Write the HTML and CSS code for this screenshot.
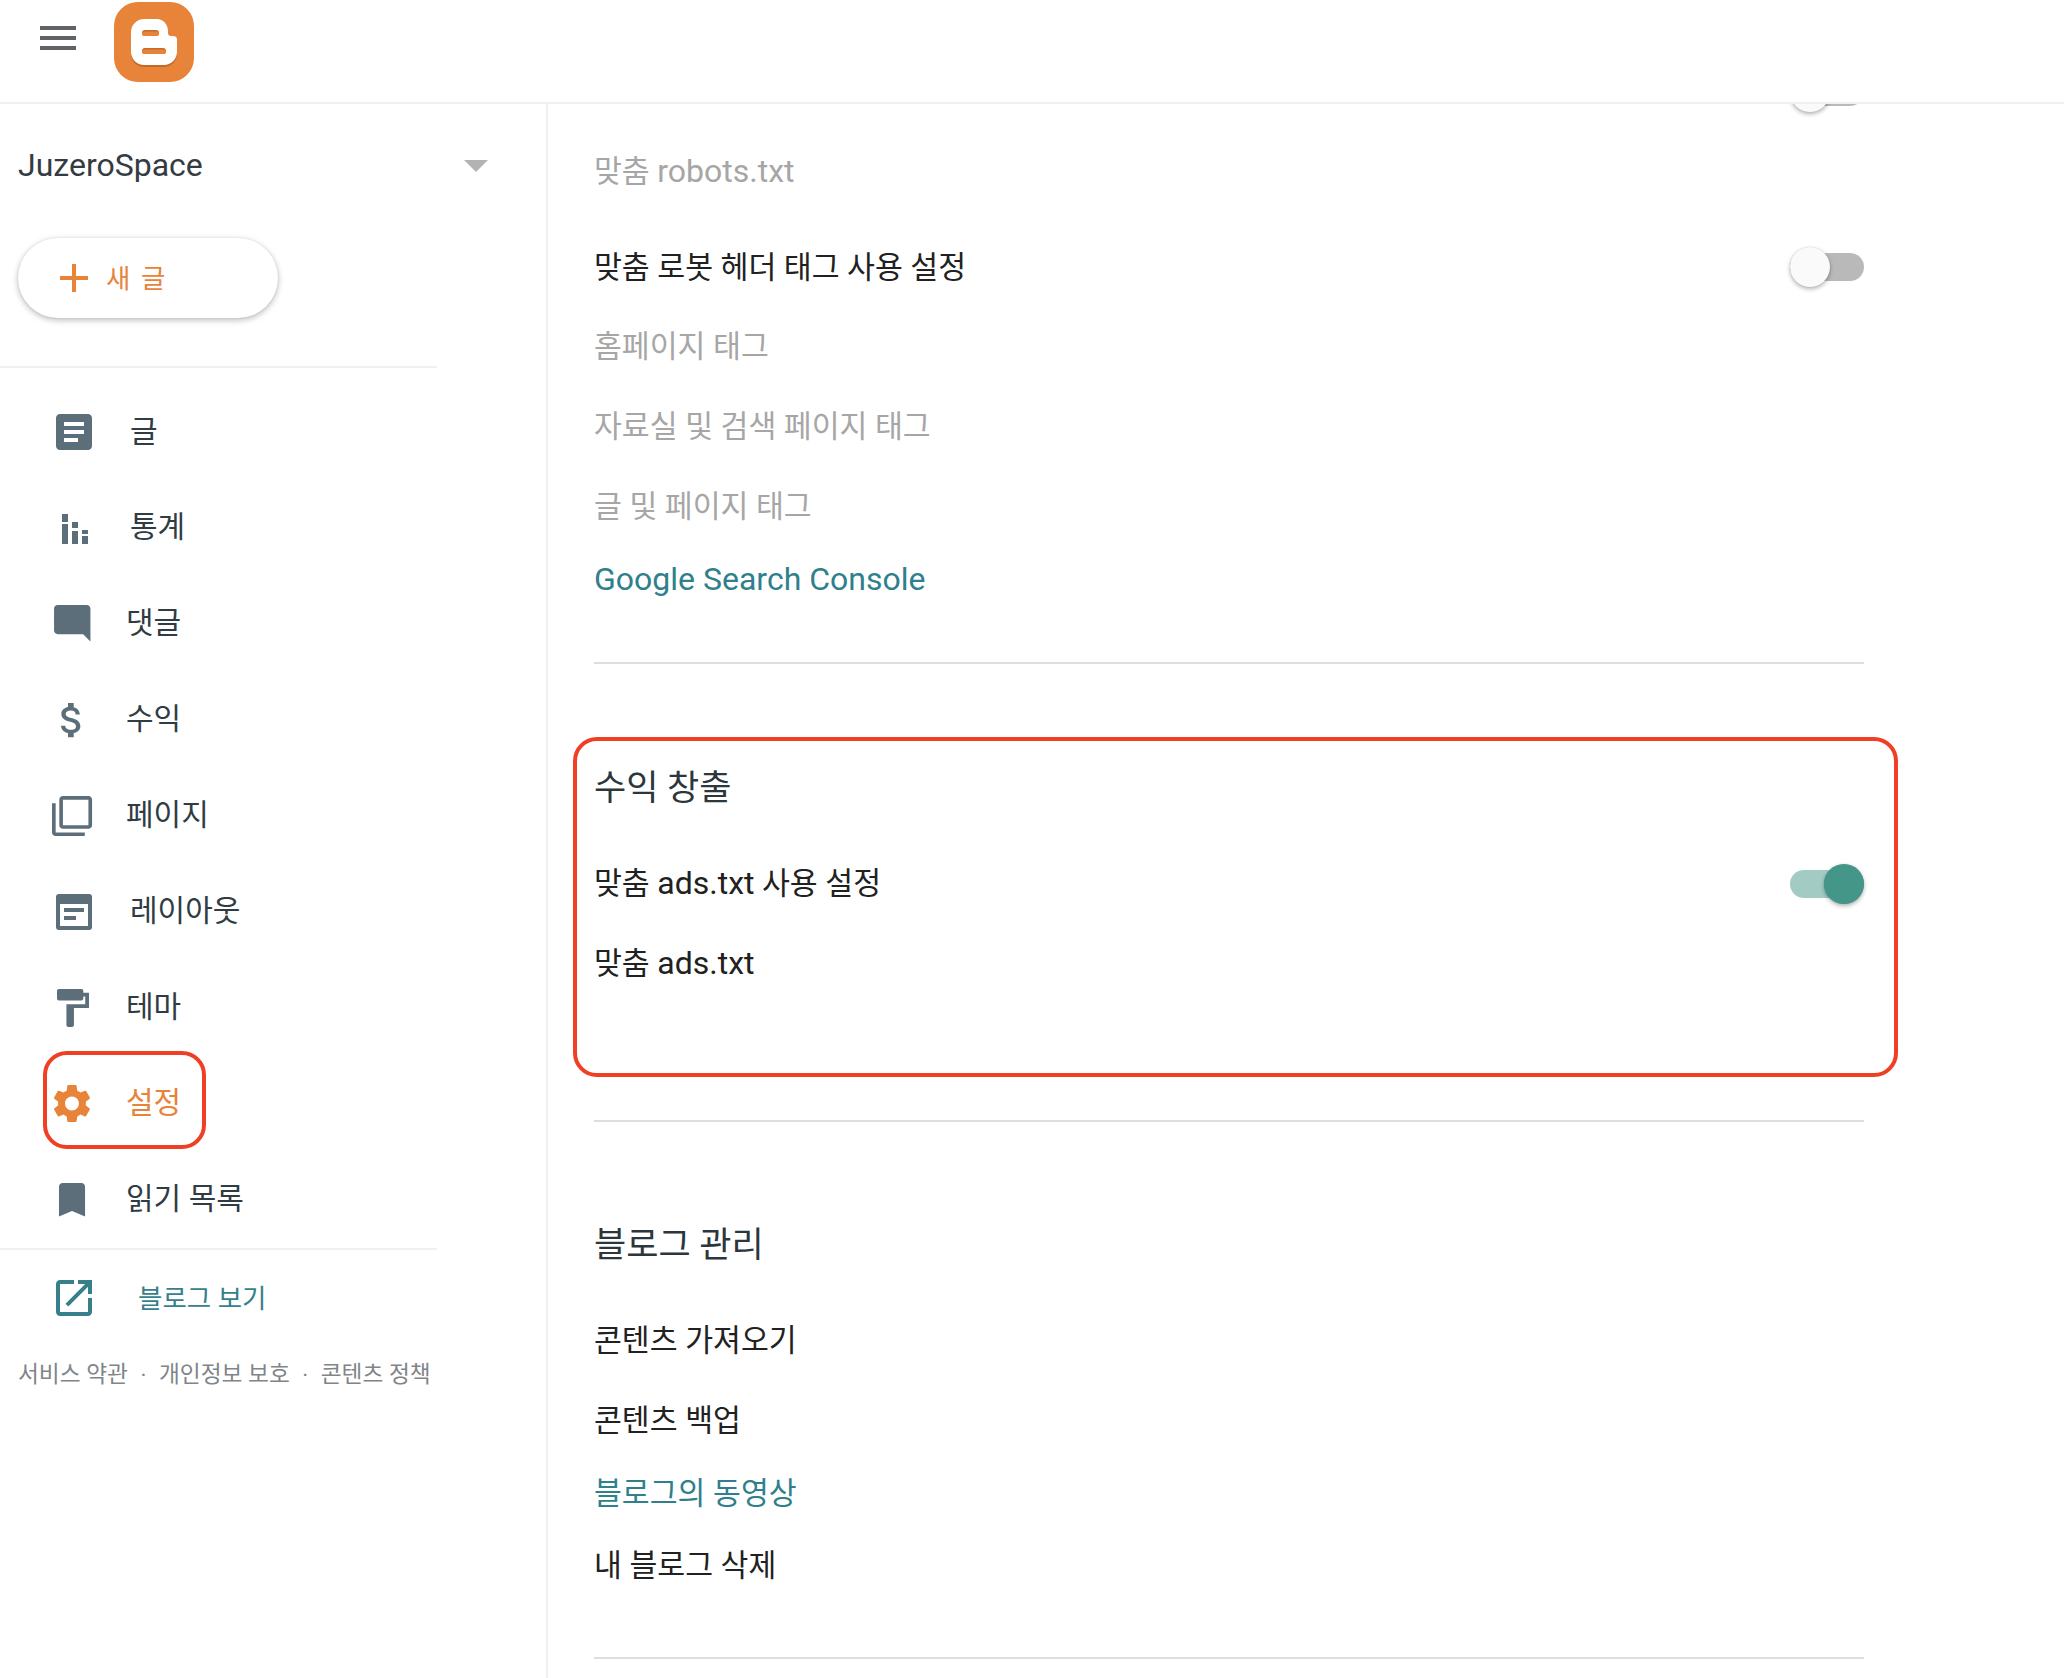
FILE: index.html
```html
<!DOCTYPE html>
<html lang="ko">
<head>
<meta charset="utf-8">
<title>Blogger 설정</title>
<link rel="stylesheet" href="styles.css">
</head>
<body>
<header class="topbar">
  <div class="burger"><span></span><span></span><span></span></div>
  <svg class="logo" viewBox="0 0 80 80">
    <rect width="80" height="80" rx="24" fill="#e8833a"/>
    <path d="M30 19h13c6 0 11 5 11 12v2c0 2 1 3 3 3h2c2 0 4 1 4 3v13c0 7-6 13-13 13H30c-7 0-13-6-13-13V32c0-7 6-13 13-13z" fill="#c46a28"/>
    <path d="M30 17h13c6 0 11 5 11 12v2c0 2 1 3 3 3h2c2 0 4 1 4 3v13c0 7-6 13-13 13H30c-7 0-13-6-13-13V30c0-7 6-13 13-13z" fill="#fff"/>
    <rect x="28" y="28" width="17" height="6" rx="3" fill="#c46a28"/>
    <rect x="28" y="29.5" width="17" height="4.5" rx="2.25" fill="#e8833a"/>
    <rect x="28" y="46" width="24" height="6" rx="3" fill="#c46a28"/>
    <rect x="28" y="47.5" width="24" height="4.5" rx="2.25" fill="#e8833a"/>
  </svg>
</header>
<div class="layout">
  <aside class="sidebar">
    <div class="blogname"><span>JuzeroSpace</span><i class="caret"></i></div>
    <button class="newpost">
      <svg class="plus" viewBox="0 0 28 28"><path d="M12 0h4v12h12v4H16v12h-4V16H0v-4h12z"/></svg>
      <span>새 글</span>
    </button>
    <nav class="nav">
      <a class="item">
        <svg class="ico" viewBox="0 0 48 48"><g transform="scale(2)"><path d="M19 3H5c-1.1 0-2 .9-2 2v14c0 1.1.9 2 2 2h14c1.1 0 2-.9 2-2V5c0-1.1-.9-2-2-2zm-5 14H7v-2h7v2zm3-4H7v-2h10v2zm0-4H7V7h10v2z"/></g></svg>
        <span class="label far first">글</span>
      </a>
      <a class="item">
        <svg class="ico" viewBox="0 0 48 48"><path d="M12 10h6v8h-6zM12 20h6v20h-6zM22 18h6v6h-6zM22 27h6v13h-6zM32 26h6v4h-6zM32 32h6v8h-6z"/></svg>
        <span class="label far">통계</span>
      </a>
      <a class="item">
        <svg class="ico" viewBox="0 0 48 48"><g transform="translate(.4 1.4) scale(1.82)"><path d="M21.99 4c0-1.1-.89-2-1.99-2H4c-1.1 0-2 .9-2 2v12c0 1.1.9 2 2 2h14l4 4-.01-18z"/></g></svg>
        <span class="label">댓글</span>
      </a>
      <a class="item">
        <svg class="ico" viewBox="0 0 48 48"><g transform="translate(-1 1.3) scale(1.9)"><path d="M11.8 10.9c-2.27-.59-3-1.2-3-2.15 0-1.09 1.01-1.85 2.7-1.85 1.78 0 2.44.85 2.5 2.1h2.21c-.07-1.72-1.12-3.3-3.21-3.81V3h-3v2.16c-1.94.42-3.5 1.68-3.5 3.61 0 2.31 1.91 3.46 4.7 4.13 2.5.6 3 1.48 3 2.41 0 .69-.49 1.79-2.7 1.79-2.06 0-2.87-.92-2.98-2.1h-2.2c.12 2.19 1.76 3.42 3.68 3.83V21h3v-2.15c1.95-.37 3.5-1.5 3.5-3.55 0-2.84-2.43-3.81-4.7-4.4z"/></g></svg>
        <span class="label">수익</span>
      </a>
      <a class="item">
        <svg class="ico" viewBox="0 0 48 48"><g transform="translate(.2 2.2) scale(1.82)"><path d="M3 5H1v16c0 1.1.9 2 2 2h16v-2H3V5zm18-4H7c-1.1 0-2 .9-2 2v14c0 1.1.9 2 2 2h14c1.1 0 2-.9 2-2V3c0-1.1-.9-2-2-2zm0 16H7V3h14v14z"/></g></svg>
        <span class="label">페이지</span>
      </a>
      <a class="item">
        <svg class="ico" viewBox="0 0 48 48"><path fill-rule="evenodd" d="M9 6h30a3 3 0 0 1 3 3v30a3 3 0 0 1-3 3H9a3 3 0 0 1-3-3V9a3 3 0 0 1 3-3zM10 16v22h28V16zM14 20h20v4H14zM14 28h12v4H14z"/></svg>
        <span class="label far">레이아웃</span>
      </a>
      <a class="item">
        <svg class="ico" viewBox="0 0 48 48"><g transform="translate(-.5 1.2) scale(1.88 1.9)"><path d="M18 4V3c0-.55-.45-1-1-1H5c-.55 0-1 .45-1 1v4c0 .55.45 1 1 1h12c.55 0 1-.45 1-1V6h1v4H9v11c0 .55.45 1 1 1h2c.55 0 1-.45 1-1v-9h8V4h-3z"/></g></svg>
        <span class="label">테마</span>
      </a>
      <a class="item active">
        <svg class="ico" viewBox="0 0 48 48"><g transform="translate(-1.2 .4) scale(1.93)"><path d="M19.14,12.94c0.04-0.3,0.06-0.61,0.06-0.94c0-0.32-0.02-0.64-0.07-0.94l2.03-1.58c0.18-0.14,0.23-0.41,0.12-0.61 l-1.92-3.32c-0.12-0.22-0.37-0.29-0.59-0.22l-2.39,0.96c-0.5-0.38-1.03-0.7-1.62-0.94L14.4,2.81c-0.04-0.24-0.24-0.41-0.48-0.41 h-3.84c-0.24,0-0.43,0.17-0.47,0.41L9.25,5.35C8.66,5.59,8.12,5.92,7.63,6.29L5.24,5.33c-0.22-0.08-0.47,0-0.59,0.22L2.74,8.87 C2.62,9.08,2.66,9.34,2.86,9.48l2.03,1.58C4.84,11.36,4.8,11.69,4.8,12s0.02,0.64,0.07,0.94l-2.03,1.58 c-0.18,0.14-0.23,0.41-0.12,0.61l1.92,3.32c0.12,0.22,0.37,0.29,0.59,0.22l2.39-0.96c0.5,0.38,1.03,0.7,1.62,0.94l0.36,2.54 c0.05,0.24,0.24,0.41,0.48,0.41h3.84c0.24,0,0.44-0.17,0.47-0.41l0.36-2.54c0.59-0.24,1.13-0.56,1.62-0.94l2.39,0.96 c0.22,0.08,0.47,0,0.59-0.22l1.92-3.32c0.12-0.22,0.07-0.47-0.12-0.61L19.14,12.94z M12,15.6c-1.98,0-3.6-1.62-3.6-3.6 s1.62-3.6,3.6-3.6s3.6,1.62,3.6,3.6S13.98,15.6,12,15.6z"/></g></svg>
        <span class="label">설정</span>
        <span class="callout"></span>
      </a>
      <a class="item">
        <svg class="ico" viewBox="0 0 48 48"><g transform="translate(-.3 1.4) scale(1.86)"><path d="M17 3H7c-1.1 0-2 .9-2 2v16l7-3 7 3V5c0-1.1-.9-2-2-2z"/></g></svg>
        <span class="label">읽기 목록</span>
      </a>
    </nav>
    <a class="viewblog">
      <svg class="ico" viewBox="0 0 48 48"><g transform="scale(2)"><path d="M19 19H5V5h7V3H5c-1.11 0-2 .9-2 2v14c0 1.1.89 2 2 2h14c1.1 0 2-.9 2-2v-7h-2v7zM14 3v2h3.59l-9.83 9.83 1.41 1.41L19 6.41V10h2V3h-7z"/></g></svg>
      <span>블로그 보기</span>
    </a>
    <div class="legal"><span>서비스 약관</span><span class="sep">·</span><span>개인정보 보호</span><span class="sep">·</span><span>콘텐츠 정책</span></div>
  </aside>
  <main class="main">
    <div class="content">
      <div class="row clipped"><span>맞춤 <b class="lat">robots.txt</b> 사용 설정</span><span class="toggle"><i></i></span></div>
      <div class="row off robots"><span>맞춤 <b class="lat">robots.txt</b></span></div>
      <div class="row gap"><span>맞춤 로봇 헤더 태그 사용 설정</span><span class="toggle"><i></i></span></div>
      <div class="row off home"><span>홈페이지 태그</span></div>
      <div class="row off"><span>자료실 및 검색 페이지 태그</span></div>
      <div class="row off"><span>글 및 페이지 태그</span></div>
      <div class="row link console"><span><b class="lat">Google Search Console</b></span></div>
      <hr class="rule r1">
      <section class="callbox">
        <h2 class="title">수익 창출</h2>
        <div class="row latin"><span>맞춤 <b class="lat">ads.txt</b> 사용 설정</span><span class="toggle on"><i></i></span></div>
        <div class="row latin"><span>맞춤 <b class="lat">ads.txt</b></span></div>
      </section>
      <hr class="rule r2">
      <h2 class="title t2">블로그 관리</h2>
      <div class="row"><span>콘텐츠 가져오기</span></div>
      <div class="row"><span>콘텐츠 백업</span></div>
      <div class="row link short video"><span>블로그의 동영상</span></div>
      <div class="row short"><span>내 블로그 삭제</span></div>
      <hr class="rule r3">
    </div>
  </main>
</div>
</body>
</html>
```
FILE: styles.css
```css
* { box-sizing: border-box; }
html, body { margin: 0; padding: 0; }
body {
  width: 2064px;
  height: 1678px;
  overflow: hidden;
  background: #fff;
  color: #212121;
  font-family: Roboto, "Noto Sans CJK KR", sans-serif;
}
.topbar {
  height: 104px;
  border-bottom: 2px solid #f0f0f0;
  display: flex;
  align-items: flex-start;
  padding: 2px 0 0 40px;
}
.burger {
  width: 36px;
  margin-top: 24px;
  display: flex;
  flex-direction: column;
  gap: 6px;
}
.burger span { display: block; height: 4px; background: #5f6368; }
.logo { width: 80px; height: 80px; margin-left: 38px; }
.layout {
  display: grid;
  grid-template-columns: 548px 1fr;
  height: 1574px;
}
.sidebar { border-right: 2px solid #f0f0f0; }
.blogname {
  height: 122px;
  padding: 0 58px 0 18px;
  display: flex;
  align-items: center;
  justify-content: space-between;
  font-size: 32px;
  color: #343b42;
}
.caret {
  width: 0;
  height: 0;
  margin-top: 2px;
  border-left: 12px solid transparent;
  border-right: 12px solid transparent;
  border-top: 12px solid #b3b3b3;
}
.newpost {
  display: flex;
  align-items: center;
  width: 260px;
  height: 80px;
  margin: 12px 0 0 18px;
  padding: 0 0 3px 42px;
  border: 0;
  border-radius: 40px;
  background: #fff;
  box-shadow: 0 2px 6px rgba(0,0,0,.28), 0 0 2px rgba(0,0,0,.08);
  color: #e8833a;
  font: inherit;
  font-size: 26.5px;
  letter-spacing: 2px;
}
.plus { width: 28px; height: 28px; fill: #e8833a; margin: 3px 18px 0 0; }
.nav {
  width: 437px;
  margin-top: 48px;
  padding-top: 16px;
  border-top: 2px solid #f0f0f0;
  border-bottom: 2px solid #f0f0f0;
}
.item {
  position: relative;
  display: flex;
  align-items: center;
  height: 96px;
  padding-left: 50px;
  font-size: 30px;
  color: #303c43;
}
.ico { width: 48px; height: 48px; flex: none; fill: #5b6e7a; }
.label { margin-left: 28px; padding-bottom: 8px; }
.label.far { margin-left: 32px; }
.label.first { padding-bottom: 6px; }
.active { color: #e8833a; }
.active .ico { fill: #e8833a; }
.callout {
  position: absolute;
  left: 43px;
  top: -5px;
  width: 163px;
  height: 98px;
  border: 4px solid #ef3f24;
  border-radius: 24px;
}
.viewblog {
  display: flex;
  align-items: center;
  height: 48px;
  margin-top: 24px;
  padding-left: 50px;
  color: #367f8b;
  font-size: 26.5px;
}
.viewblog .ico { fill: #367f8b; }
.viewblog span { margin-left: 40px; padding-bottom: 3px; }
.legal {
  display: flex;
  align-items: center;
  gap: 12.5px;
  margin-top: 34px;
  padding-left: 18px;
  font-size: 22.7px;
  color: #808589;
  white-space: nowrap;
}
.sep { padding-top: 8px; line-height: 1; }
.main { overflow: hidden; padding: 0 200px 0 46px; min-width: 0; }
.content { margin-top: -52px; }
.row {
  height: 80px;
  display: flex;
  align-items: center;
  justify-content: space-between;
  font-size: 30.3px;
  color: #212121;
}
.row > span:first-child { padding-bottom: 5px; }
.row.latin > span:first-child { padding-bottom: 7px; }
.row.robots > span:first-child { padding-bottom: 6px; }
.row.clipped > span:first-child { padding-bottom: 10px; }
.lat { font-size: 32px; font-weight: 400; }
.row.off { color: #a6a6a6; }
.row.gap { margin-top: 15px; }
.row.home { margin-top: -1px; }
.row.link { height: 66px; color: #2f7f8c; }
.row.console { margin-top: 2px; }
.row.short { height: 72px; }
.row.video { margin-top: -3px; }
.toggle {
  position: relative;
  display: block;
  width: 74px;
  height: 28px;
  border-radius: 14px;
  background: #b9b9b9;
}
.toggle i {
  position: absolute;
  left: 0;
  top: -6px;
  width: 40px;
  height: 40px;
  border-radius: 50%;
  background: #fafafa;
  box-shadow: 0 2px 4px rgba(0,0,0,.3), 0 0 1px rgba(0,0,0,.2);
}
.toggle.on { background: #a2cbc4; }
.toggle.on i { left: 34px; background: #439688; }
.rule { height: 2px; margin: 0; border: 0; background: #dedede; }
.r1 { margin-top: 48px; }
.r2 { margin-top: 43px; }
.r3 { margin-top: 56px; }
.callbox {
  margin: 73px -34px 0 -21px;
  height: 340px;
  padding: 15.5px 30px 0 17px;
  border: 4px solid #ef3f24;
  border-radius: 24px;
}
.title {
  margin: 0;
  height: 56px;
  display: flex;
  align-items: center;
  font-size: 35px;
  font-weight: 400;
  color: #2c373d;
}
.callbox .title { margin-bottom: 31.5px; }
.t2 { margin: 91.5px 0 30.5px; }
```
